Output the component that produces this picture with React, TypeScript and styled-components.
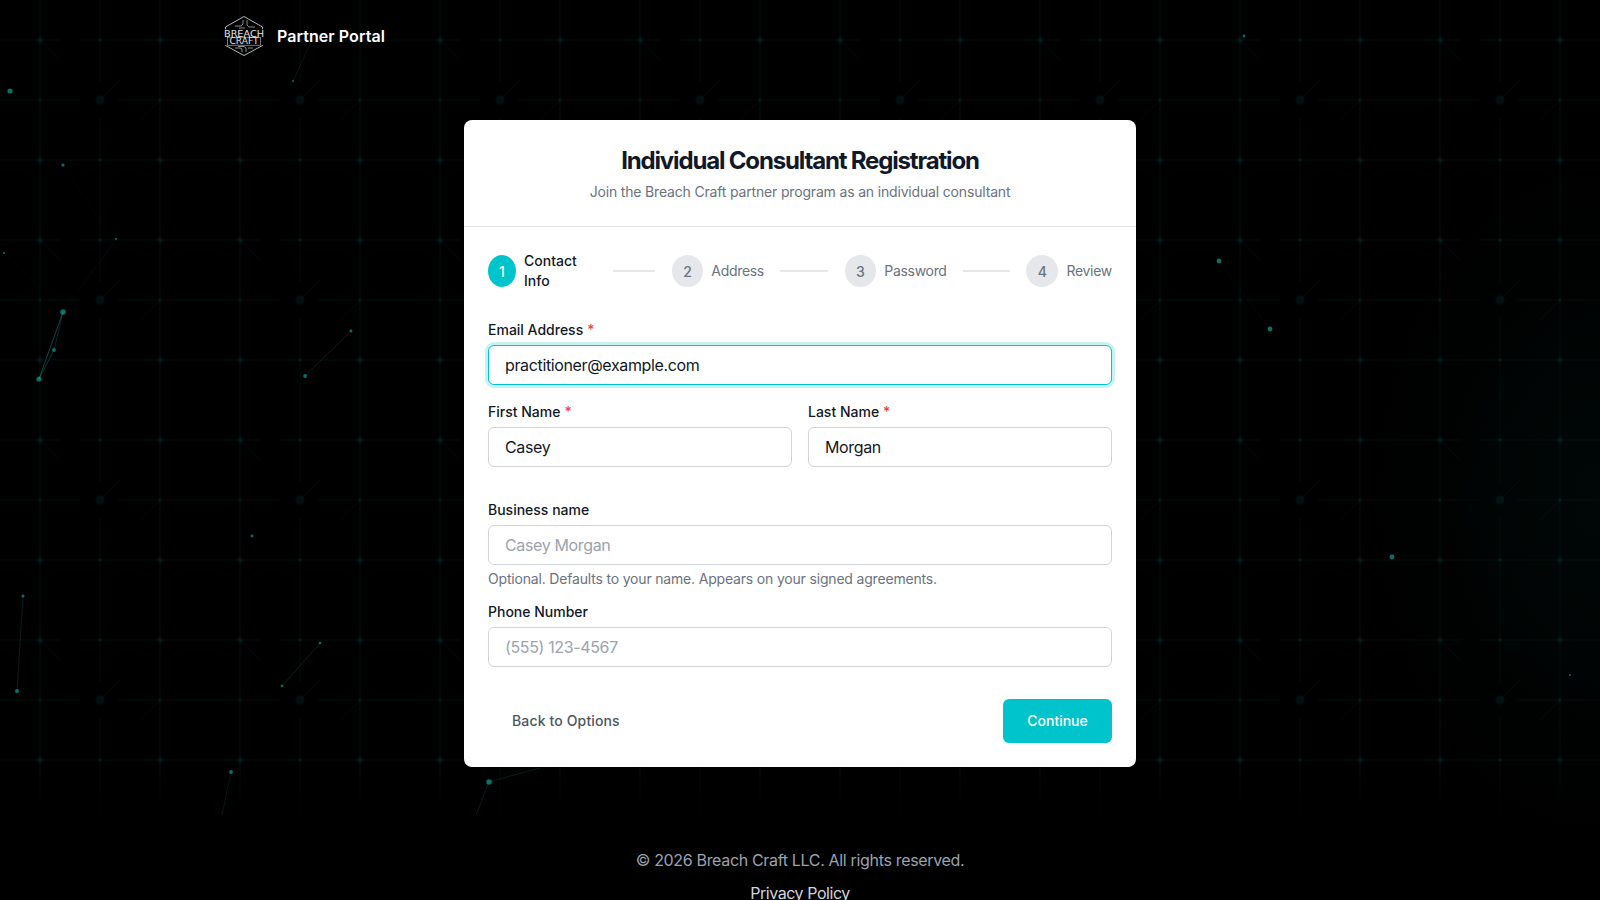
import React from "react"
import styled, { createGlobalStyle } from "styled-components"

const GlobalStyle = createGlobalStyle`
  html, body {
    margin: 0;
    padding: 0;
    background: #000;
    font-family: Inter, "Liberation Sans", sans-serif;
  }
  * {
    box-sizing: border-box;
  }
`

const Page = styled.div`
  position: relative;
  height: 100vh;
  overflow: hidden;
  background: #000;
`

const Backdrop = styled.div`
  position: absolute;
  inset: 0;
  background: radial-gradient(ellipse 230px 340px at 1600px 500px, rgba(13, 148, 136, 0.05), transparent);
`

const GridSvg = styled.svg`
  position: absolute;
  inset: 0;
  mask-image: linear-gradient(to bottom, #000 0, #000 770px, transparent 825px);
`

const ParticleSvg = styled.svg`
  position: absolute;
  inset: 0;
`

const Content = styled.div`
  position: relative;
  display: flex;
  flex-direction: column;
  align-items: center;
`

const Header = styled.header`
  width: 1152px;
  height: 72px;
  display: flex;
  align-items: center;
  gap: 13px;
`

const BrandName = styled.span`
  color: #fff;
  font-size: 16px;
  font-weight: 600;
  letter-spacing: 0.07px;
`

const Main = styled.main`
  padding: 48px 0;
`

const Card = styled.section`
  width: 672px;
  background: #fff;
  border-radius: 8px;
  overflow: hidden;
`

const CardHead = styled.div`
  padding: 24px;
  text-align: center;
  border-bottom: 1px solid #e5e7eb;
`

const Title = styled.h1`
  margin: 0 0 4px;
  font-size: 24px;
  line-height: 34px;
  font-weight: 700;
  letter-spacing: -1.17px;
  color: #111827;
`

const Subtitle = styled.p`
  margin: 0;
  font-size: 14px;
  line-height: 20px;
  letter-spacing: -0.17px;
  color: #6b7280;
`

const CardBody = styled.div`
  padding: 24px;
`

const Stepper = styled.ol`
  display: flex;
  align-items: center;
  justify-content: space-between;
  margin: 0 0 29px;
  padding: 0;
  list-style: none;
`

const Step = styled.li`
  display: flex;
  align-items: center;
  gap: 8px;
`

const StepCircle = styled.span<{ $active?: boolean; $width: number }>`
  width: ${(props) => props.$width}px;
  height: 32px;
  border-radius: 50%;
  display: flex;
  align-items: center;
  justify-content: center;
  font-size: 14px;
  font-weight: 500;
  background: ${(props) => (props.$active ? "#00c4cc" : "#e5e7eb")};
  color: ${(props) => (props.$active ? "#fff" : "#6b7280")};
`

const StepLabel = styled.span<{ $active?: boolean; $width?: number }>`
  font-size: 14px;
  line-height: 20px;
  font-weight: ${(props) => (props.$active ? 500 : 400)};
  letter-spacing: ${(props) => (props.$active ? "0" : "-0.3px")};
  color: ${(props) => (props.$active ? "#111827" : "#6b7280")};
  width: ${(props) => (props.$width ? `${props.$width}px` : "auto")};
`

const Connector = styled.span<{ $width: number }>`
  width: ${(props) => props.$width}px;
  height: 2px;
  background: #e5e7eb;
`

const Field = styled.div<{ $gap: number }>`
  margin-bottom: ${(props) => props.$gap}px;
`

const FieldRow = styled.div`
  display: grid;
  grid-template-columns: 1fr 1fr;
  gap: 16px;
  margin-bottom: 33px;
`

const Label = styled.label`
  display: block;
  margin-bottom: 5px;
  font-size: 14px;
  line-height: 20px;
  font-weight: 500;
  color: #111827;
`

const Required = styled.span`
  margin-left: 4px;
  color: #ef4444;
`

const Input = styled.input<{ $focused?: boolean }>`
  display: block;
  width: 100%;
  height: 40px;
  padding: 0 16px;
  font-family: inherit;
  font-size: 16px;
  letter-spacing: -0.36px;
  color: #111827;
  background: #fff;
  outline: none;
  border-radius: 6px;
  border: 1px solid ${(props) => (props.$focused ? "#00c4cc" : "#d1d5db")};
  box-shadow: ${(props) => (props.$focused ? "0 0 0 3px rgba(0, 196, 204, 0.22)" : "none")};

  &::placeholder {
    color: #9ca3af;
  }
`

const Help = styled.p`
  margin: 4px 0 0;
  font-size: 14px;
  line-height: 20px;
  letter-spacing: -0.18px;
  color: #6b7280;
`

const Actions = styled.div`
  display: flex;
  align-items: center;
  justify-content: space-between;
`

const BackButton = styled.button`
  height: 44px;
  padding: 0 24px 2px;
  border: 0;
  background: transparent;
  font-family: inherit;
  font-size: 14px;
  font-weight: 500;
  letter-spacing: 0.14px;
  color: #4b5563;
`

const ContinueButton = styled.button`
  height: 44px;
  width: 109px;
  padding: 0 0 2px;
  border: 0;
  border-radius: 6px;
  background: #00c4cc;
  font-family: inherit;
  font-size: 14px;
  font-weight: 500;
  color: #fff;
`

const Footer = styled.footer`
  display: flex;
  flex-direction: column;
  align-items: center;
  gap: 9px;
  padding-top: 33px;
  font-size: 16px;
  line-height: 24px;
  letter-spacing: -0.33px;
`

const Copyright = styled.div`
  color: #9ca3af;
`

const FooterLink = styled.a`
  color: #d1d5db;
  text-decoration: none;
  letter-spacing: -0.44px;
`

// x, y, r of the drifting particles
const dots = [
  [10, 91, 2.6], [293, 81, 1], [63, 165, 1.6], [116, 239, 1.1], [4, 253, 1.1], [63, 312, 2.8],
  [54, 350, 1.9], [39, 379, 2.6], [351, 331, 1.4], [305, 376, 1.9], [252, 536, 1.4], [23, 596, 1.5],
  [17, 691, 2], [320, 643, 1.3], [282, 686, 1.3], [231, 772, 1.9], [489, 782, 2.8], [1244, 36, 1.4],
  [1219, 261, 2.4], [1270, 329, 2.4], [1392, 557, 2.4], [1570, 675, 1],
]

// x1, y1, x2, y2, opacity
const links = [
  [63, 312, 39, 379, 0.4], [63, 312, 54, 350, 0.22], [54, 350, 39, 379, 0.3], [351, 331, 305, 376, 0.18],
  [293, 81, 312, 40, 0.14], [4, 253, 63, 312, 0.05], [63, 165, 103, 225, 0.04], [63, 312, 116, 239, 0.05],
  [116, 239, 98, 266, 0.04], [23, 596, 17, 691, 0.18], [320, 643, 282, 686, 0.2], [231, 772, 222, 815, 0.14],
  [489, 782, 476, 815, 0.16], [489, 782, 540, 768, 0.16], [1219, 261, 1270, 329, 0.05],
]

const Background = () => (
  <Backdrop>
    <GridSvg width="1600" height="900">
      <defs>
        <pattern id="circuit" width="200" height="200" patternUnits="userSpaceOnUse">
          <g fill="none" stroke="#0d9488" strokeOpacity="0.08" strokeWidth="1">
            <path d="M0 40H60M80 40H200M0 100H80M118 100H200M0 160H200" />
            <path d="M40 0V200M100 0V82M100 118V200M160 0V200" />
            <path d="M40 40L60 60M100 100L120 80M160 100L140 120" />
          </g>
          <g fill="#0d9488" fillOpacity="0.11">
            <path d="M40 36L44 40L40 44L36 40ZM160 36L164 40L160 44L156 40ZM40 156L44 160L40 164L36 160ZM160 156L164 160L160 164L156 160Z" />
            <circle cx="100" cy="40" r="2" />
            <circle cx="40" cy="100" r="2" />
            <circle cx="100" cy="100" r="4.5" />
            <circle cx="160" cy="100" r="2" />
            <circle cx="100" cy="160" r="2" />
          </g>
        </pattern>
      </defs>
      <rect width="1600" height="900" fill="url(#circuit)" />
    </GridSvg>
    <ParticleSvg width="1600" height="900">
      {links.map(([x1, y1, x2, y2, o], i) => (
        <line key={i} x1={x1} y1={y1} x2={x2} y2={y2} stroke="#14b8a6" strokeOpacity={o} strokeWidth="1" />
      ))}
      {dots.map(([x, y, r], i) => (
        <circle key={i} cx={x} cy={y} r={r} fill="#14b8a6" fillOpacity="0.6" />
      ))}
    </ParticleSvg>
  </Backdrop>
)

const Logo = () => (
  <svg width="40" height="40" viewBox="0 0 40 40">
    <g fill="none" stroke="#c9c9c9">
      <path d="M20 0.5L38.5 11V29.5L20 39.5L1.5 29.5V11Z" strokeWidth="0.9" />
      <path d="M11 10H17L19 8V4M23 4V9L25 11H31M15 12H21M14 30.5H20L22 32V36M18 36V33L16 32H11M24 32H29" strokeWidth="0.7" />
    </g>
    <rect x="0" y="13.2" width="40" height="15.8" fill="#000" />
    <rect x="3.5" y="21.2" width="33" height="8" fill="none" stroke="#c9c9c9" strokeWidth="0.6" />
    <text x="20" y="20.6" textAnchor="middle" textLength="40" lengthAdjust="spacingAndGlyphs" fontFamily="'DejaVu Sans', sans-serif" fontSize="9.4" fill="#e4e4e4">BREACH</text>
    <text x="20" y="28.4" textAnchor="middle" textLength="29" lengthAdjust="spacingAndGlyphs" fontFamily="'DejaVu Sans', sans-serif" fontSize="9" fill="#e4e4e4">CRAFT</text>
  </svg>
)

const App: React.FC = () => {
  return (
    <Page>
      <GlobalStyle />
      <Background />
      <Content>
        <Header>
          <Logo />
          <BrandName>Partner Portal</BrandName>
        </Header>
        <Main>
          <Card>
            <CardHead>
              <Title>Individual Consultant Registration</Title>
              <Subtitle>Join the Breach Craft partner program as an individual consultant</Subtitle>
            </CardHead>
            <CardBody>
              <Stepper>
                <Step>
                  <StepCircle $active $width={28}>1</StepCircle>
                  <StepLabel $active $width={73}>Contact Info</StepLabel>
                </Step>
                <Connector $width={42} />
                <Step>
                  <StepCircle $width={31.5}>2</StepCircle>
                  <StepLabel>Address</StepLabel>
                </Step>
                <Connector $width={48} />
                <Step>
                  <StepCircle $width={31.5}>3</StepCircle>
                  <StepLabel>Password</StepLabel>
                </Step>
                <Connector $width={47} />
                <Step>
                  <StepCircle $width={32}>4</StepCircle>
                  <StepLabel>Review</StepLabel>
                </Step>
              </Stepper>

              <Field $gap={17}>
                <Label>Email Address<Required>*</Required></Label>
                <Input $focused defaultValue="practitioner@example.com" />
              </Field>
              <FieldRow>
                <div>
                  <Label>First Name<Required>*</Required></Label>
                  <Input defaultValue="Casey" />
                </div>
                <div>
                  <Label>Last Name<Required>*</Required></Label>
                  <Input defaultValue="Morgan" />
                </div>
              </FieldRow>
              <Field $gap={13}>
                <Label>Business name</Label>
                <Input placeholder="Casey Morgan" />
                <Help>Optional. Defaults to your name. Appears on your signed agreements.</Help>
              </Field>
              <Field $gap={32}>
                <Label>Phone Number</Label>
                <Input placeholder="(555) 123-4567" />
              </Field>
              <Actions>
                <BackButton>Back to Options</BackButton>
                <ContinueButton>Continue</ContinueButton>
              </Actions>
            </CardBody>
          </Card>
        </Main>
        <Footer>
          <Copyright>© 2026 Breach Craft LLC. All rights reserved.</Copyright>
          <FooterLink href="#privacy">Privacy Policy</FooterLink>
        </Footer>
      </Content>
    </Page>
  )
}

export default App
